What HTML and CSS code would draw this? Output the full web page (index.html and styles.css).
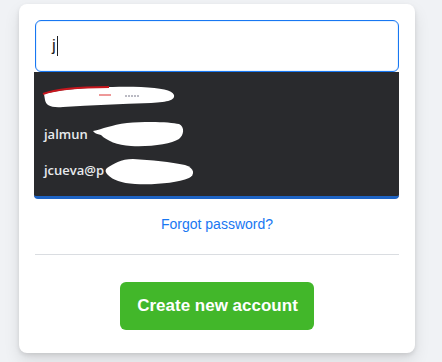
FILE: index.html
```html
<!DOCTYPE html>
<html>
<head>
<meta charset="utf-8">
<link rel="stylesheet" href="styles.css">
</head>
<body>
<div class="card">
  <div class="field-wrap">
    <div class="field field-active"><span class="value">j</span><span class="caret"></span></div>
    <div class="autofill">
      <div class="item">
        <svg class="blob blob1" width="136" height="24" viewBox="0 0 136 24">
          <path d="M3,9 C20,4 60,1 100,2 C120,3 131,5 133,10 C134,15 128,17 110,18 C80,19 50,20 22,22 C9,23 5,20 4,15 Z" fill="#fff"/>
          <path d="M2,9 C15,4 40,2 68,2" stroke="#c8161d" stroke-width="2" fill="none"/>
          <path d="M58,10 L70,10" stroke="#d33" stroke-width="1"/>
          <path d="M84,11 L98,11" stroke="#778" stroke-width="1" stroke-dasharray="2 1"/>
        </svg>
      </div>
      <div class="item"><span class="txt">jalmun</span><svg class="blob blob2" width="92" height="28" viewBox="0 0 92 28">
          <path d="M0,10 C10,8 18,4 34,2 C55,0 78,1 86,3 C92,6 91,14 86,18 C78,23 58,26 38,25 C24,24 14,20 8,14 C4,13 1,12 0,10 Z" fill="#fff"/>
        </svg></div>
      <div class="item"><span class="txt">jcueva@p</span><svg class="blob blob3" width="90" height="28" viewBox="0 0 90 28">
          <path d="M2,10 C8,6 16,1 28,1 C46,2 66,4 80,7 C90,10 90,17 84,20 C72,25 50,27 30,26 C16,25 8,22 3,17 C0,14 0,12 2,10 Z" fill="#fff"/>
        </svg></div>
    </div>
  </div>
  <div class="field field-hidden"></div>
  <div class="login-btn"></div>
  <a class="forgot" href="#">Forgot password?</a>
  <div class="divider"></div>
  <div class="create-row"><span class="create-btn">Create new account</span></div>
</div>
</body>
</html>
```
FILE: styles.css
```css
* { box-sizing: border-box; }
html, body { margin: 0; padding: 0; }
body {
  background: #f0f2f5;
  width: 442px;
  height: 362px;
  overflow: hidden;
  padding: 4px 0 0 19px;
  font-family: "Liberation Sans", Arial, sans-serif;
}
.card {
  width: 396px;
  height: 349px;
  background: #fff;
  border-radius: 8px;
  box-shadow: 0 2px 4px rgba(0,0,0,0.1), 0 8px 16px rgba(0,0,0,0.1);
  padding: 16px 16px 0;
  display: flex;
  flex-direction: column;
}
.field-wrap { position: relative; }
.field {
  height: 52px;
  border: 1px solid #dddfe2;
  border-radius: 6px;
  padding: 0 16px;
  font-size: 17px;
  color: #1c1e21;
  display: flex;
  align-items: center;
}
.field-active { border-color: #1877f2; box-shadow: 0 0 0 1px #e7f3ff inset; }
.value { line-height: 20px; }
.caret {
  display: inline-block;
  width: 1px;
  height: 20px;
  background: #1c1e21;
  margin-left: 1px;
}
.field-hidden { margin-top: 12px; }
.login-btn {
  margin-top: 12px;
  height: 48px;
  background: #1877f2;
  border-radius: 6px;
}
.autofill {
  position: absolute;
  top: 52px;
  left: -1px;
  width: 365px;
  height: 127px;
  background: #292a2d;
  border-bottom: 3px solid #1d63c4;
  border-radius: 0 0 4px 4px;
  padding-top: 8px;
  z-index: 2;
  font-family: "Open Sans", "Noto Sans", sans-serif;
}
.item {
  height: 36px;
  display: flex;
  align-items: center;
  padding-left: 10px;
  color: #e8eaed;
  font-size: 13px;
  font-weight: 600;
}
.txt { white-space: nowrap; }
.blob { display: block; flex: none; }
.blob1 { margin-left: -3px; margin-top: -2px; }
.blob2 { margin-left: 5px; margin-top: 2px; }
.blob3 { margin-left: 1px; margin-top: 3px; }
.forgot {
  display: block;
  margin-top: 19px;
  text-align: center;
  font-size: 14px;
  line-height: 19px;
  color: #1877f2;
  text-decoration: none;
}
.divider {
  margin-top: 20px;
  height: 1px;
  background: #dadde1;
}
.create-row {
  margin-top: 27px;
  display: flex;
  justify-content: center;
}
.create-btn {
  display: flex;
  align-items: center;
  height: 48px;
  padding: 0 16px 0 17px;
  background: #42b72a;
  color: #fff;
  border-radius: 6px;
  font-size: 17px;
  font-weight: bold;
}
```
